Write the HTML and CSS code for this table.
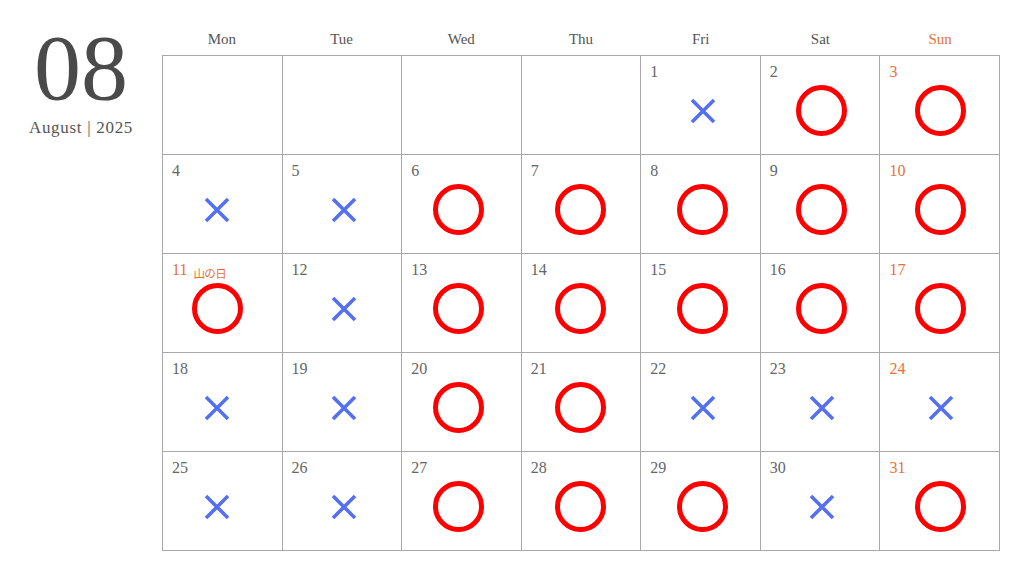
FILE: index.html
```html
<!DOCTYPE html>
<html lang="ja">
<head>
<meta charset="utf-8">
<title>August 2025</title>
<link rel="stylesheet" href="styles.css">
</head>
<body>
<svg width="0" height="0" class="defs">
  <defs>
    <symbol id="x" viewBox="0 0 26 26">
      <path d="M2 2 L24 24 M24 2 L2 24" stroke="#5470f0" stroke-width="3.6" fill="none"/>
    </symbol>
  </defs>
</svg>
<div class="page">
  <aside class="side">
    <div class="month">08</div>
    <div class="sub">August | 2025</div>
  </aside>
  <main class="cal">
    <div class="head">
      <div>Mon</div><div>Tue</div><div>Wed</div><div>Thu</div><div>Fri</div><div>Sat</div><div class="sun">Sun</div>
    </div>
    <div class="grid">
      <div class="cell"></div>
      <div class="cell"></div>
      <div class="cell"></div>
      <div class="cell"></div>
      <div class="cell"><div class="num">1</div><svg class="cross"><use href="#x"/></svg></div>
      <div class="cell"><div class="num">2</div><div class="ok"></div></div>
      <div class="cell sun"><div class="num">3</div><div class="ok"></div></div>

      <div class="cell"><div class="num">4</div><svg class="cross"><use href="#x"/></svg></div>
      <div class="cell"><div class="num">5</div><svg class="cross"><use href="#x"/></svg></div>
      <div class="cell"><div class="num">6</div><div class="ok"></div></div>
      <div class="cell"><div class="num">7</div><div class="ok"></div></div>
      <div class="cell"><div class="num">8</div><div class="ok"></div></div>
      <div class="cell"><div class="num">9</div><div class="ok"></div></div>
      <div class="cell sun"><div class="num">10</div><div class="ok"></div></div>

      <div class="cell sun"><div class="num">11<span class="hol">山の日</span></div><div class="ok"></div></div>
      <div class="cell"><div class="num">12</div><svg class="cross"><use href="#x"/></svg></div>
      <div class="cell"><div class="num">13</div><div class="ok"></div></div>
      <div class="cell"><div class="num">14</div><div class="ok"></div></div>
      <div class="cell"><div class="num">15</div><div class="ok"></div></div>
      <div class="cell"><div class="num">16</div><div class="ok"></div></div>
      <div class="cell sun"><div class="num">17</div><div class="ok"></div></div>

      <div class="cell"><div class="num">18</div><svg class="cross"><use href="#x"/></svg></div>
      <div class="cell"><div class="num">19</div><svg class="cross"><use href="#x"/></svg></div>
      <div class="cell"><div class="num">20</div><div class="ok"></div></div>
      <div class="cell"><div class="num">21</div><div class="ok"></div></div>
      <div class="cell"><div class="num">22</div><svg class="cross"><use href="#x"/></svg></div>
      <div class="cell"><div class="num">23</div><svg class="cross"><use href="#x"/></svg></div>
      <div class="cell sun"><div class="num">24</div><svg class="cross"><use href="#x"/></svg></div>

      <div class="cell"><div class="num">25</div><svg class="cross"><use href="#x"/></svg></div>
      <div class="cell"><div class="num">26</div><svg class="cross"><use href="#x"/></svg></div>
      <div class="cell"><div class="num">27</div><div class="ok"></div></div>
      <div class="cell"><div class="num">28</div><div class="ok"></div></div>
      <div class="cell"><div class="num">29</div><div class="ok"></div></div>
      <div class="cell"><div class="num">30</div><svg class="cross"><use href="#x"/></svg></div>
      <div class="cell sun"><div class="num">31</div><div class="ok"></div></div>
    </div>
  </main>
</div>
</body>
</html>
```
FILE: styles.css
```css
html, body {
  margin: 0;
  padding: 0;
  background: #fff;
}
body {
  width: 1024px;
  height: 576px;
  overflow: hidden;
  font-family: "Liberation Serif", "Noto Sans CJK JP", serif;
  color: #555;
}
.defs {
  position: absolute;
  width: 0;
  height: 0;
}
.page {
  display: flex;
}
.side {
  width: 162px;
  display: flex;
  flex-direction: column;
  align-items: center;
  padding-top: 27px;
}
.month {
  font-size: 94px;
  line-height: 80px;
  color: #4a4a4a;
  margin-left: 0;
}
.sub {
  font-size: 17px;
  line-height: 20px;
  margin-top: 11px;
  letter-spacing: 0.7px;
  color: #555;
}
.cal {
  width: 838px;
  padding-top: 28px;
}
.head {
  display: grid;
  grid-template-columns: repeat(7, 1fr);
  height: 27px;
  font-size: 15px;
  line-height: 22px;
  text-align: center;
  color: #555;
}
.head .sun {
  color: #e8703a;
}
.grid {
  display: grid;
  grid-template-columns: repeat(7, 1fr);
  grid-template-rows: repeat(5, 99px);
  border-top: 1px solid #a8a8a8;
  border-left: 1px solid #a8a8a8;
}
.cell {
  border-right: 1px solid #a8a8a8;
  border-bottom: 1px solid #a8a8a8;
  display: flex;
  flex-direction: column;
  align-items: center;
  --shift: 0px;
}
.cell:nth-child(7n+1) { --shift: -10px; }
.cell:nth-child(7n+2) { --shift: 4px; }
.cell:nth-child(7n+3) { --shift: -6px; }
.cell:nth-child(7n+4) { --shift: 0px; }
.cell:nth-child(7n+5) { --shift: 4px; }
.cell:nth-child(7n+6) { --shift: 3px; }
.cell:nth-child(7n) { --shift: 2px; }
.num {
  align-self: stretch;
  padding: 6px 0 0 9px;
  font-size: 16px;
  line-height: 20px;
  height: 22px;
  color: #666;
}
.cell.sun .num {
  color: #e8703a;
}
.hol {
  font-family: "Noto Sans CJK JP", sans-serif;
  font-size: 11.5px;
  margin-left: 6px;
  position: relative;
  top: 3px;
  letter-spacing: -0.6px;
}
.ok {
  width: 51px;
  height: 51px;
  box-sizing: border-box;
  border: 5.3px solid #ff0000;
  border-radius: 50%;
  margin-top: 1px;
  margin-left: var(--shift);
}
.cross {
  width: 26px;
  height: 26px;
  margin-top: 14px;
  margin-left: var(--shift);
}
```
